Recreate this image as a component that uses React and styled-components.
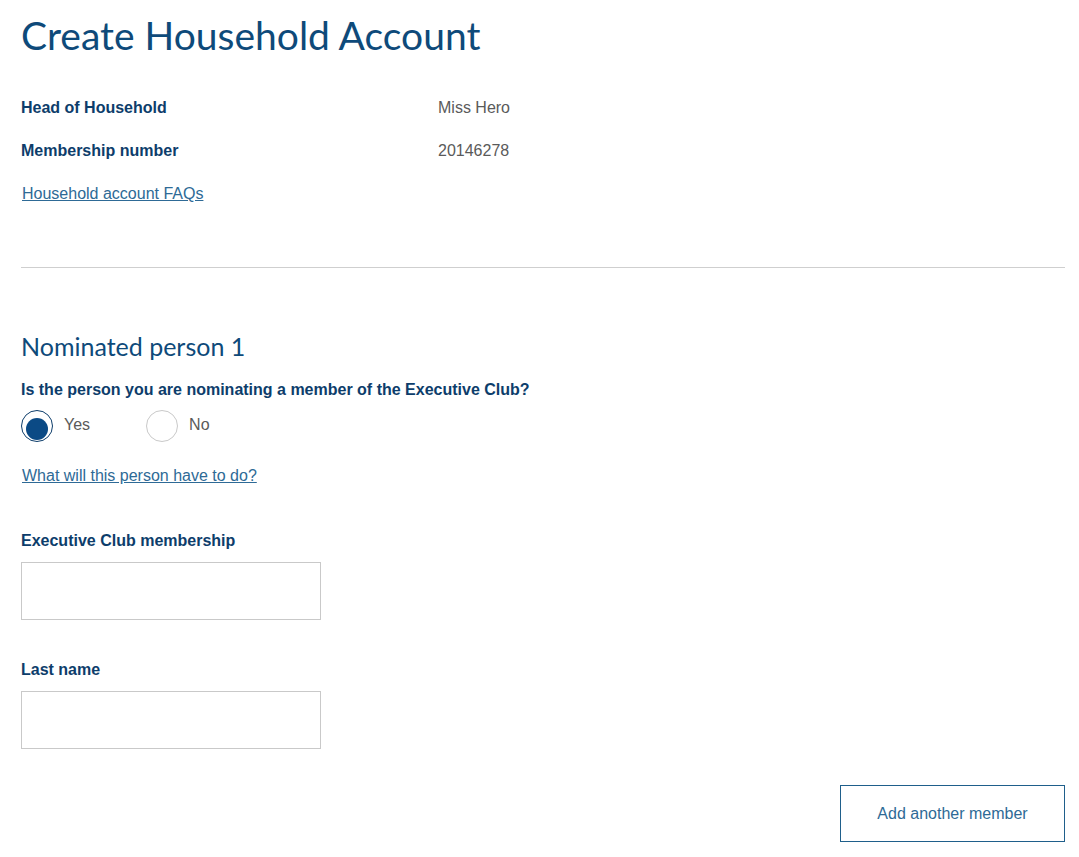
import styled, { createGlobalStyle } from "styled-components";

const GlobalStyle = createGlobalStyle`
  body {
    margin: 0;
    background: #fff;
    font-family: 'Liberation Sans', Arial, sans-serif;
  }
`;

export default function App() {
  return (
    <>
      <GlobalStyle />
      <Page>
        <Title>Create Household Account</Title>
        <Details>
          <Label>Head of Household</Label>
          <Value>Miss Hero</Value>
          <Label>Membership number</Label>
          <Value>20146278</Value>
        </Details>
        <TextLink href="#">Household account FAQs</TextLink>
        <Divider />
        <SubTitle>Nominated person 1</SubTitle>
        <Question>Is the person you are nominating a member of the Executive Club?</Question>
        <RadioRow>
          <RadioOption>
            <Radio $checked />
            <span>Yes</span>
          </RadioOption>
          <RadioOption>
            <Radio />
            <span>No</span>
          </RadioOption>
        </RadioRow>
        <TextLink href="#">What will this person have to do?</TextLink>
        <Field $top={46}>
          <FieldLabel>Executive Club membership</FieldLabel>
          <Input />
        </Field>
        <Field $top={40}>
          <FieldLabel>Last name</FieldLabel>
          <Input />
        </Field>
        <Actions>
          <OutlineButton>Add another member</OutlineButton>
        </Actions>
      </Page>
    </>
  );
}

const Page = styled.div`
  padding: 11px 14px 20px 21px;
  display: flex;
  flex-direction: column;
  align-items: flex-start;
`;

const Title = styled.h1`
  margin: 0;
  font-family: 'Lato', 'Open Sans', sans-serif;
  font-weight: 400;
  font-size: 39px;
  line-height: 48px;
  color: #0e4a7a;
`;

const Details = styled.div`
  margin-top: 39px;
  display: grid;
  grid-template-columns: 417px auto;
  row-gap: 24px;
  line-height: 19px;
`;

const Label = styled.div`
  font-size: 16px;
  font-weight: 700;
  color: #0d3d6b;
`;

const Value = styled.div`
  font-size: 16px;
  color: #5a5a5a;
`;

const TextLink = styled.a`
  margin-top: 24px;
  margin-left: 1px;
  font-size: 16px;
  line-height: 19px;
  color: #2e6a96;
  text-decoration: underline;
`;

const Divider = styled.hr`
  align-self: stretch;
  margin: 64px 0 0;
  border: 0;
  border-top: 1px solid #cfcfcf;
`;

const SubTitle = styled.h2`
  margin: 62px 0 0;
  font-family: 'Lato', 'Open Sans', sans-serif;
  font-weight: 400;
  font-size: 25px;
  line-height: 32px;
  color: #0e4a7a;
`;

const Question = styled.div`
  margin-top: 18px;
  font-size: 16px;
  font-weight: 700;
  line-height: 19px;
  color: #0d3d6b;
`;

const RadioRow = styled.div`
  margin-top: 11px;
  display: flex;
  gap: 56px;
`;

const RadioOption = styled.label`
  display: flex;
  align-items: flex-start;
  gap: 11px;
  font-size: 16px;
  color: #5a5a5a;
  line-height: 19px;
  span {
    padding-top: 5px;
  }
`;

const Radio = styled.span`
  box-sizing: border-box;
  width: 32px;
  height: 32px;
  border-radius: 50%;
  border: 1px solid ${(p) => (p.$checked ? "#0d3d6b" : "#c9c9c9")};
  display: flex;
  align-items: center;
  justify-content: center;
  &::after {
    content: "";
    display: ${(p) => (p.$checked ? "block" : "none")};
    width: 22px;
    height: 22px;
    border-radius: 50%;
    background: #0b4a85;
  }
`;

const Field = styled.div`
  margin-top: ${(p) => p.$top}px;
  display: flex;
  flex-direction: column;
  gap: 12px;
`;

const FieldLabel = styled.div`
  font-size: 16px;
  font-weight: 700;
  line-height: 19px;
  color: #0d3d6b;
`;

const Input = styled.input`
  box-sizing: border-box;
  width: 300px;
  height: 58px;
  border: 1px solid #c9c9c9;
  border-radius: 0;
  outline: none;
  padding: 0 12px;
  font-size: 16px;
`;

const Actions = styled.div`
  align-self: stretch;
  margin-top: 36px;
  display: flex;
  justify-content: flex-end;
`;

const OutlineButton = styled.button`
  box-sizing: border-box;
  width: 225px;
  height: 57px;
  background: #fff;
  border: 1px solid #1f5f8b;
  font-family: 'Liberation Sans', Arial, sans-serif;
  font-size: 16px;
  color: #2e6a96;
  cursor: pointer;
`;
